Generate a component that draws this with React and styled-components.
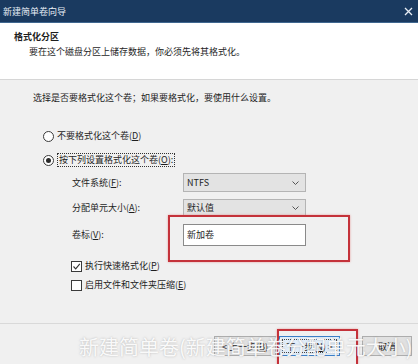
import React from "react";
import styled, { createGlobalStyle } from "styled-components";

const Global = createGlobalStyle`
    html, body {
        margin: 0;
        padding: 0;
        background: #f0f0f0;
    }
    * {
        box-sizing: border-box;
    }
`;

const Window = styled.div`
    position: relative;
    width: 418px;
    height: 364px;
    overflow: hidden;
    display: flex;
    flex-direction: column;
    background: #f0f0f0;
    font-family: "Noto Sans CJK SC", "Noto Sans", sans-serif;
    font-size: 9px;
    color: #1e1e1e;
`;

const TitleBar = styled.div`
    height: 23px;
    flex: none;
    display: flex;
    align-items: center;
    justify-content: space-between;
    padding: 0 5px 0 3px;
    background: #1a3a60;
    border-bottom: 1px solid #3f6790;
    color: #e8eef5;
`;

const Header = styled.div`
    height: 57px;
    flex: none;
    background: #ffffff;
    border-bottom: 1px solid #d6d6d6;
    padding: 7px 0 0 14px;
    line-height: 14px;
`;

const Heading = styled.div`
    font-weight: bold;
`;

const SubText = styled.div`
    margin-top: 1px;
    padding-left: 15px;
`;

const Body = styled.div`
    flex: 1;
    padding: 11px 0 0 33px;
    line-height: 14px;
`;

const Choices = styled.div`
    margin: 24px 0 0 10px;
    display: flex;
    flex-direction: column;
    gap: 10px;
`;

const Choice = styled.label`
    display: flex;
    align-items: center;
    gap: 3px;
    height: 14px;
`;

const Radio = styled.span`
    width: 11px;
    height: 11px;
    border-radius: 50%;
    border: 1px solid #3a3a3a;
    background: #fff;
    display: flex;
    align-items: center;
    justify-content: center;

    &::after {
        content: "";
        width: 5px;
        height: 5px;
        border-radius: 50%;
        background: ${(p) => (p.$checked ? "#2a2a2a" : "transparent")};
    }
`;

const Focus = styled.span`
    border: 1px dotted #333;
    padding: 0 1px;
    line-height: 12px;
`;

const Form = styled.div`
    margin: 6px 0 0 39px;
    display: grid;
    grid-template-columns: 111px 123px;
    row-gap: 7px;
    align-items: center;
`;

const Select = styled.div`
    height: ${(p) => p.$h}px;
    display: flex;
    align-items: center;
    justify-content: space-between;
    padding: 0 6px 0 3px;
    background: #e3e3e3;
    border: 1px solid #b4b4b4;
`;

const InputWrap = styled.div`
    position: relative;
`;

const TextBox = styled.div`
    height: 22px;
    display: flex;
    align-items: center;
    padding-left: 3px;
    background: #fff;
    border: 1px solid #8a8a8a;
`;

const Mark = styled.div`
    position: absolute;
    border: 2px solid #c4323a;
    box-shadow: 0 0 2px rgba(230, 120, 120, 0.7);
    pointer-events: none;
`;

const Checks = styled.div`
    margin: 13px 0 0 38px;
    display: flex;
    flex-direction: column;
    gap: 5px;
`;

const Box = styled.span`
    width: 11px;
    height: 11px;
    border: 1px solid #3a3a3a;
    background: #fff;
    display: flex;
    align-items: center;
    justify-content: center;
`;

const Footer = styled.div`
    height: 41px;
    flex: none;
    border-top: 1px solid #d9d9d9;
    display: flex;
    justify-content: flex-end;
    align-items: flex-start;
    padding: 12px 6px 0 0;
`;

const Button = styled.div`
    position: relative;
    width: ${(p) => p.$w}px;
    height: 20px;
    margin-left: ${(p) => p.$gap}px;
    display: flex;
    align-items: center;
    justify-content: center;
    background: ${(p) => (p.$primary ? "#e2eefa" : "#e1e1e1")};
    border: 1px solid ${(p) => (p.$primary ? "#3c7fc8" : "#adadad")};
`;

const ButtonFocus = styled.span`
    position: absolute;
    inset: 2px;
    border: 1px dotted #444;
`;

const Watermark = styled.div`
    position: absolute;
    left: 79px;
    top: 335px;
    font-size: 20px;
    line-height: 24px;
    color: rgba(255, 255, 255, 0.92);
    text-shadow: 0 0 2px rgba(120, 120, 120, 0.5);
    white-space: nowrap;
    pointer-events: none;
`;

const U = styled.span`
    text-decoration: underline;
`;

const Chevron = () => (
    <svg width="7" height="4" viewBox="0 0 7 4">
        <path d="M0.5 0.5 L3.5 3.5 L6.5 0.5" fill="none" stroke="#555" strokeWidth="1" />
    </svg>
);

const App = () => {
    return (
        <Window>
            <Global />
            <TitleBar>
                <span>新建简单卷向导</span>
                <svg width="9" height="9" viewBox="0 0 9 9">
                    <path d="M1 1 L8 8 M8 1 L1 8" stroke="#e8eef5" strokeWidth="1.3" />
                </svg>
            </TitleBar>
            <Header>
                <Heading>格式化分区</Heading>
                <SubText>要在这个磁盘分区上储存数据，你必须先将其格式化。</SubText>
            </Header>
            <Body>
                <div>选择是否要格式化这个卷；如果要格式化，要使用什么设置。</div>
                <Choices>
                    <Choice>
                        <Radio />
                        <span>不要格式化这个卷(<U>D</U>)</span>
                    </Choice>
                    <Choice>
                        <Radio $checked />
                        <Focus>按下列设置格式化这个卷(<U>O</U>):</Focus>
                    </Choice>
                </Choices>
                <Form>
                    <span>文件系统(<U>F</U>):</span>
                    <Select $h={19}>
                        <span>NTFS</span>
                        <Chevron />
                    </Select>
                    <span>分配单元大小(<U>A</U>):</span>
                    <Select $h={18}>
                        <span>默认值</span>
                        <Chevron />
                    </Select>
                    <span>卷标(<U>V</U>):</span>
                    <InputWrap>
                        <TextBox>新加卷</TextBox>
                        <Mark style={{ left: -15, top: -9, width: 182, height: 47 }} />
                    </InputWrap>
                </Form>
                <Checks>
                    <Choice>
                        <Box>
                            <svg width="9" height="9" viewBox="0 0 9 9">
                                <path d="M1.5 4.5 L3.7 6.8 L7.8 1.8" fill="none" stroke="#333" strokeWidth="1.1" />
                            </svg>
                        </Box>
                        <span>执行快速格式化(<U>P</U>)</span>
                    </Choice>
                    <Choice>
                        <Box />
                        <span>启用文件和文件夹压缩(<U>E</U>)</span>
                    </Choice>
                </Checks>
            </Body>
            <Footer>
                <Button $w={62} $gap={0}>&lt; 上一步(<U>B</U>)</Button>
                <Button $w={61} $gap={3} $primary>
                    <ButtonFocus />
                    下一步(<U>N</U>) &gt;
                    <Mark style={{ left: -3, top: -8, width: 81, height: 46 }} />
                </Button>
                <Button $w={50} $gap={22}>取消</Button>
            </Footer>
            <Watermark>新建简单卷(新建简单卷分配单元大小)</Watermark>
        </Window>
    );
};

export default App;
